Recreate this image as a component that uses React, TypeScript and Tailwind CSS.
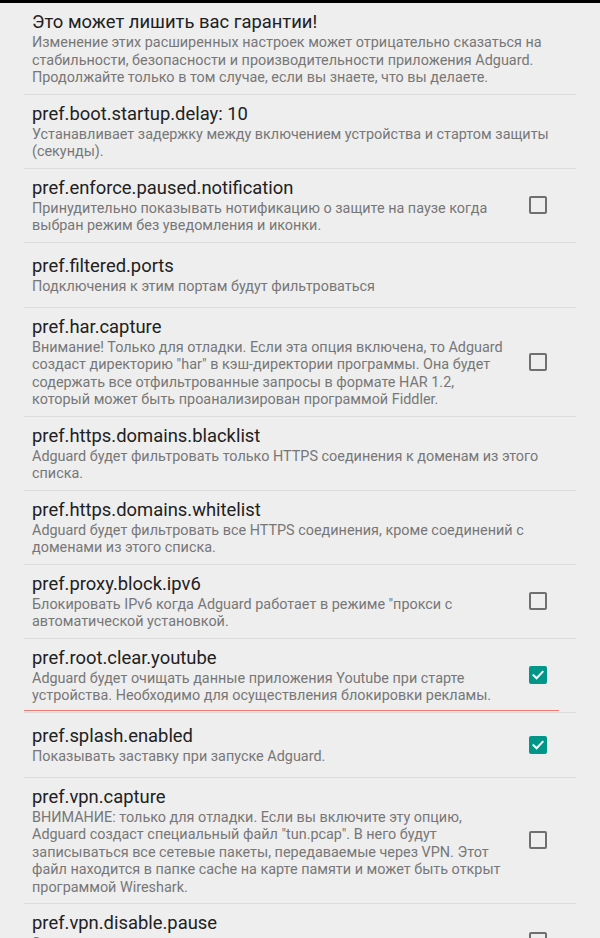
import React from 'react';

type Pref = {
  title: string;
  summary: string;
  check?: 'on' | 'off';
  focused?: boolean;
};

const prefs: Pref[] = [
  {
    title: 'Это может лишить вас гарантии!',
    summary:
      'Изменение этих расширенных настроек может отрицательно сказаться на стабильности, безопасности и производительности приложения Adguard. Продолжайте только в том случае, если вы знаете, что вы делаете.',
  },
  {
    title: 'pref.boot.startup.delay: 10',
    summary: 'Устанавливает задержку между включением устройства и стартом защиты (секунды).',
  },
  {
    title: 'pref.enforce.paused.notification',
    summary: 'Принудительно показывать нотификацию о защите на паузе когда выбран режим без уведомления и иконки.',
    check: 'off',
  },
  {
    title: 'pref.filtered.ports',
    summary: 'Подключения к этим портам будут фильтроваться',
  },
  {
    title: 'pref.har.capture',
    summary:
      'Внимание! Только для отладки. Если эта опция включена, то Adguard создаст директорию "har" в кэш-директории программы. Она будет содержать все отфильтрованные запросы в формате HAR 1.2, который может быть проанализирован программой Fiddler.',
    check: 'off',
  },
  {
    title: 'pref.https.domains.blacklist',
    summary: 'Adguard будет фильтровать только HTTPS соединения к доменам из этого списка.',
  },
  {
    title: 'pref.https.domains.whitelist',
    summary: 'Adguard будет фильтровать все HTTPS соединения, кроме соединений с доменами из этого списка.',
  },
  {
    title: 'pref.proxy.block.ipv6',
    summary: 'Блокировать IPv6 когда Adguard работает в режиме "прокси с автоматической установкой.',
    check: 'off',
  },
  {
    title: 'pref.root.clear.youtube',
    summary:
      'Adguard будет очищать данные приложения Youtube при старте устройства. Необходимо для осуществления блокировки рекламы.',
    check: 'on',
    focused: true,
  },
  {
    title: 'pref.splash.enabled',
    summary: 'Показывать заставку при запуске Adguard.',
    check: 'on',
  },
  {
    title: 'pref.vpn.capture',
    summary:
      'ВНИМАНИЕ: только для отладки. Если вы включите эту опцию, Adguard создаст специальный файл "tun.pcap". В него будут записываться все сетевые пакеты, передаваемые через VPN. Этот файл находится в папке cache на карте памяти и может быть открыт программой Wireshark.',
    check: 'off',
  },
  {
    title: 'pref.vpn.disable.pause',
    summary: 'Запретить постановку защиты на паузу, когда включен режим локального VPN.',
    check: 'off',
  },
];

const CheckBox = ({ on }: { on: boolean }) =>
  on ? (
    <div className="w-[18px] h-[18px] rounded-[2px] bg-[#009688] flex items-center justify-center">
      <svg width="14" height="14" viewBox="0 0 14 14" fill="none">
        <path d="M2.5 7.2 L5.6 10.2 L11.6 3.8" stroke="#ffffff" strokeWidth="2" strokeLinecap="square" />
      </svg>
    </div>
  ) : (
    <div className="w-[18px] h-[18px] rounded-[2px] border-2 border-[#6f6f6f]" />
  );

const PrefRow = ({ p }: { p: Pref }) => (
  <div className="relative flex items-center min-h-[65px] border-b border-[#dcdcdc]">
    <div className={`flex-1 py-[7px] pl-[8px] ${p.check ? 'pr-[4px]' : 'pr-[10px]'}`}>
      <div className="text-[18.4px] leading-[24px] text-[#212121]">{p.title}</div>
      <div className="text-[14.4px] leading-[17.5px] text-[#777777]">{p.summary}</div>
    </div>
    {p.check && (
      <div className="w-[66px] shrink-0 flex justify-center pr-[10px]">
        <CheckBox on={p.check === 'on'} />
      </div>
    )}
    {p.focused && <div className="absolute left-0 right-[17px] bottom-[1px] h-[1px] bg-[#f0786c]" />}
  </div>
);

export default function App() {
  return (
    <div
      className="min-h-screen bg-[#eeeeee] border-t-[3px] border-black"
      style={{ fontFamily: 'Roboto, "Noto Sans", sans-serif' }}
    >
      <div className="mx-[24px]">
        {prefs.map(p => (
          <PrefRow key={p.title} p={p} />
        ))}
      </div>
    </div>
  );
}
